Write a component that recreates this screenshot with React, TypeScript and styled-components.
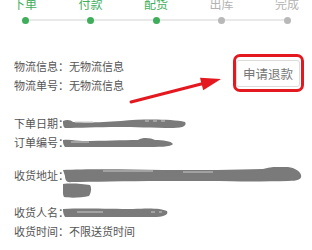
import React from "react";
import styled, { createGlobalStyle } from "styled-components";

const Global = createGlobalStyle`
  html, body { margin: 0; padding: 0; background: #fff; }
  body {
    font-family: "Noto Sans CJK SC", "Noto Sans", sans-serif;
    width: 312px;
    height: 250px;
    overflow: hidden;
  }
`;

const Page = styled.div`
  position: relative;
  width: 312px;
  height: 250px;
  overflow: hidden;
  background: #fff;
`;

const Steps = styled.div`
  position: relative;
  display: flex;
  justify-content: space-between;
  margin-top: -3px;
  &::before {
    content: "";
    position: absolute;
    left: 25px;
    right: 25px;
    top: 22px;
    height: 2px;
    background: #e9e9e9;
  }
`;

const Step = styled.div`
  position: relative;
  width: 50px;
  display: flex;
  flex-direction: column;
  align-items: center;
`;

const StepLabel = styled.span<{ $done: boolean }>`
  font-size: 12px;
  line-height: 14px;
  color: ${(p) => (p.$done ? "#3fae5b" : "#b3b3b3")};
`;

const StepDot = styled.span<{ $done: boolean }>`
  width: 7px;
  height: 7px;
  margin-top: 6px;
  border-radius: 50%;
  background: ${(p) => (p.$done ? "#3fae5b" : "#b8b8b8")};
`;

const InfoRow = styled.div`
  display: flex;
  align-items: flex-start;
  justify-content: space-between;
  margin-top: 30px;
  padding: 0 8px 0 14px;
`;

const InfoText = styled.div`
  padding-top: 3px;
  display: flex;
  flex-direction: column;
`;

const Line = styled.div`
  font-size: 11px;
  line-height: 19px;
  color: #555;
  white-space: nowrap;
`;

const RefundFrame = styled.div`
  border: 3px solid #e3191f;
  border-radius: 7px;
  padding: 3px 1px 2px 0;
  display: flex;
`;

const RefundButton = styled.div`
  height: 25px;
  border: 1px solid #dcdcdc;
  border-radius: 3px;
  padding: 0 6px;
  font-size: 12.5px;
  line-height: 25px;
  color: #777;
  background: #fff;
`;

const OrderSection = styled.div`
  margin-top: 19px;
  padding-left: 14px;
  display: flex;
  flex-direction: column;
`;

const Field = styled.div<{ $mt?: number; $top?: boolean }>`
  display: flex;
  align-items: ${(p) => (p.$top ? "flex-start" : "center")};
  margin-top: ${(p) => p.$mt ?? 0}px;
  font-size: 11px;
  line-height: 19px;
  color: #555;
  white-space: nowrap;
`;

const Redaction = styled.svg<{ $dy?: number }>`
  display: block;
  margin-left: -6px;
  margin-top: ${(p) => p.$dy ?? 0}px;
  flex: none;
`;

const ArrowSvg = styled.svg`
  position: absolute;
  left: 0;
  top: 0;
  pointer-events: none;
`;

const steps = [
  { label: "下单", done: true },
  { label: "付款", done: true },
  { label: "配货", done: true },
  { label: "出库", done: false },
  { label: "完成", done: false },
];

const INK = "#7a7a7a";
const FADE = "#c9c9c9";

export default function App() {
  return (
    <Page>
      <Global />
      <Steps>
        {steps.map((s) => (
          <Step key={s.label}>
            <StepLabel $done={s.done}>{s.label}</StepLabel>
            <StepDot $done={s.done} />
          </Step>
        ))}
      </Steps>

      <InfoRow>
        <InfoText>
          <Line>物流信息：无物流信息</Line>
          <Line>物流单号：无物流信息</Line>
        </InfoText>
        <RefundFrame>
          <RefundButton>申请退款</RefundButton>
        </RefundFrame>
      </InfoRow>

      <OrderSection>
        <Field>
          <span>下单日期：</span>
          <Redaction width="124" height="12" viewBox="0 0 124 12">
            <path
              d="M0 3 C4 1 8 2 10 4 C28 5 40 4 58 3 C80 1 108 1 122 4 C124 7 121 10 110 10 C90 10 70 9 55 9 C35 9 15 10 2 10 C0 9 0 6 0 3 Z"
              fill={INK}
            />
            <path d="M12 4 L30 4 M82 3 L86 3 M90 3 L94 3 M98 3 L102 3" stroke={FADE} strokeWidth="1" />
          </Redaction>
        </Field>
        <Field>
          <span>订单编号：</span>
          <Redaction width="112" height="12" viewBox="0 0 112 12">
            <path
              d="M0 3 C8 2 14 4 20 4 C40 4 60 3 75 3 C80 0 88 1 92 3 C100 3 108 4 110 7 C108 10 96 10 80 10 C60 10 30 10 2 10 C0 8 0 5 0 3 Z"
              fill={INK}
            />
            <path d="M8 5 L26 5" stroke={FADE} strokeWidth="1" />
          </Redaction>
        </Field>
        <Field $mt={14} $top>
          <span>收货地址：</span>
          <Redaction width="240" height="32" viewBox="0 0 240 32" $dy={1}>
            <path
              d="M0 3 C20 2 60 2 100 3 C140 3 170 3 200 2 C208 0 215 -1 225 0 C232 1 237 4 238 8 C239 12 236 14 225 14 C190 15 150 14 100 14 C60 14 30 15 8 15 C4 16 2 13 2 9 Z"
              fill={INK}
            />
            <path d="M40 4 L90 4 M120 5 L150 5" stroke={FADE} strokeWidth="1" />
            <path
              d="M0 17 C8 16 20 17 27 18 C29 21 28 26 26 29 C18 31 6 31 1 30 C-1 26 0 20 0 17 Z"
              fill={INK}
            />
          </Redaction>
        </Field>
        <Field $mt={4}>
          <span>收货人名：</span>
          <Redaction width="106" height="12" viewBox="0 0 106 12">
            <path
              d="M0 2 C20 1 50 2 70 2 C85 1 98 1 104 4 C106 8 100 10 90 10 C60 10 30 10 2 10 C0 7 0 4 0 2 Z"
              fill={INK}
            />
            <path d="M14 5 L40 5 M88 5 L92 5 M96 5 L99 5" stroke={FADE} strokeWidth="1" />
          </Redaction>
        </Field>
        <Field>收货时间：不限送货时间</Field>
      </OrderSection>

      <ArrowSvg width="312" height="250" viewBox="0 0 312 250">
        <line x1="131" y1="102" x2="205" y2="83" stroke="#e3191f" strokeWidth="3" strokeLinecap="round" />
        <polygon points="221,79 200,77.7 203.2,90.3" fill="#e3191f" />
      </ArrowSvg>
    </Page>
  );
}
